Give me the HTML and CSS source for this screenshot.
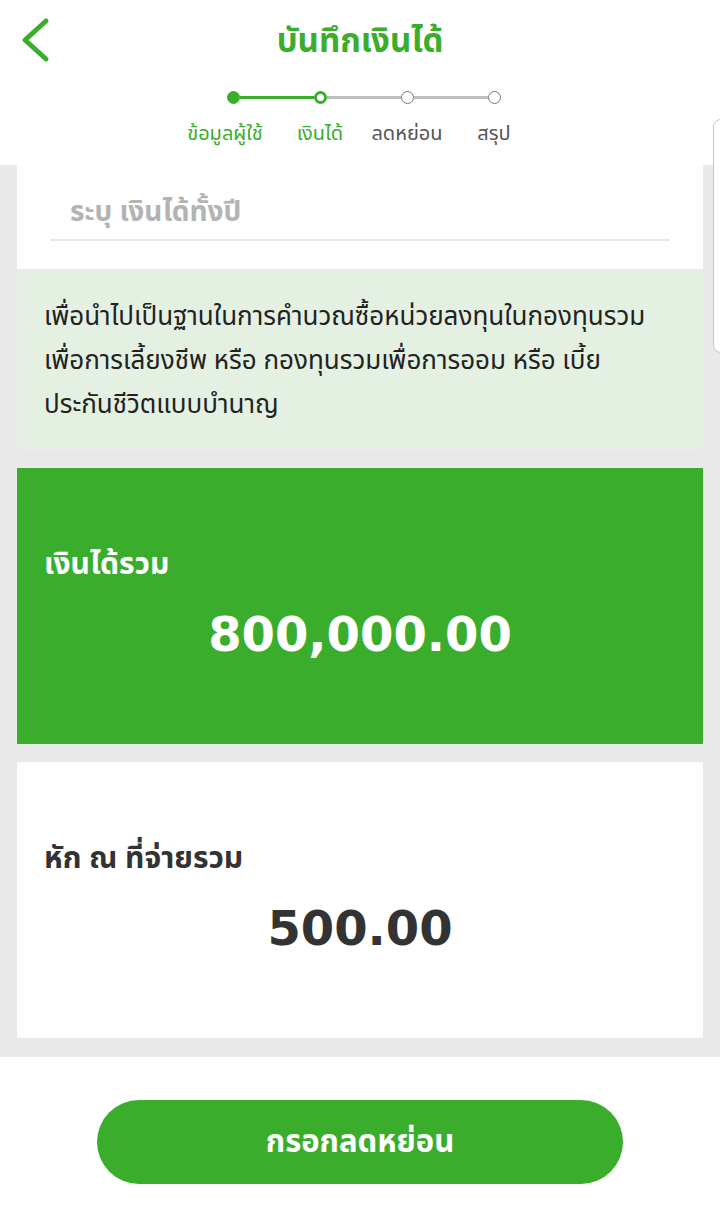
FILE: index.html
```html
<!DOCTYPE html>
<html lang="th">
<head>
<meta charset="utf-8">
<title>บันทึกเงินได้</title>
<link rel="stylesheet" href="styles.css">
</head>
<body>
<div class="app">
  <header class="topbar">
    <div class="titlebar">
      <button class="back" aria-label="back">
        <svg width="34" height="46" viewBox="0 0 34 46"><path d="M28 4 L7 23 L28 42" fill="none" stroke="#3aae2c" stroke-width="5" stroke-linecap="round" stroke-linejoin="round"/></svg>
      </button>
      <h1 class="title">บันทึกเงินได้</h1>
    </div>
    <div class="stepper">
      <div class="track">
        <span class="dot dot-done"></span>
        <span class="line line-done"></span>
        <span class="dot dot-current"></span>
        <span class="line"></span>
        <span class="dot"></span>
        <span class="line"></span>
        <span class="dot"></span>
      </div>
      <div class="labels">
        <span class="label label-on">ข้อมูลผู้ใช้</span>
        <span class="label label-on">เงินได้</span>
        <span class="label">ลดหย่อน</span>
        <span class="label">สรุป</span>
      </div>
    </div>
  </header>

  <main class="content">
    <section class="panel">
      <div class="field">
        <span class="placeholder">ระบุ เงินได้ทั้งปี</span>
      </div>
      <p class="note">เพื่อนำไปเป็นฐานในการคำนวณซื้อหน่วยลงทุนในกองทุนรวม<br>เพื่อการเลี้ยงชีพ หรือ กองทุนรวมเพื่อการออม หรือ เบี้ย<br>ประกันชีวิตแบบบำนาญ</p>
    </section>
    <section class="card card-green">
      <h2 class="card-label">เงินได้รวม</h2>
      <div class="card-amount">800,000.00</div>
    </section>
    <section class="card card-white">
      <h2 class="card-label">หัก ณ ที่จ่ายรวม</h2>
      <div class="card-amount">500.00</div>
    </section>
  </main>

  <footer class="actions">
    <button class="primary">กรอกลดหย่อน</button>
  </footer>

  <div class="edge-handle"></div>
</div>
</body>
</html>
```

FILE: styles.css
```css
* { box-sizing: border-box; }
html, body { margin: 0; padding: 0; }
body {
  width: 720px;
  height: 1226px;
  background: #ffffff;
  font-family: "Noto Sans", "Noto Sans Thai", sans-serif;
  overflow: hidden;
}
.app { position: relative; width: 720px; height: 1226px; }

.topbar { background: #fff; height: 165px; }
.titlebar {
  position: relative;
  height: 80px;
  display: flex;
  align-items: center;
  justify-content: center;
}
.back {
  position: absolute;
  left: 18px;
  top: 17px;
  border: 0;
  background: none;
  padding: 0;
  width: 34px;
  height: 46px;
}
.title {
  margin: 0 0 2px;
  color: #3aae2c;
  font-size: 33px;
  font-weight: 700;
  line-height: 1;
}

.stepper {
  display: flex;
  flex-direction: column;
  align-items: center;
  padding-left: 7px;
}
.track { display: flex; align-items: center; height: 14px; margin-top: 10px; }
.dot {
  width: 13px; height: 13px; border-radius: 50%;
  background: #fff; border: 1px solid #777;
  flex: none;
}
.dot-done { background: #3aae2c; border-color: #3aae2c; }
.dot-current { border: 3px solid #3aae2c; }
.line { width: 74px; height: 3px; background: #bdbdbd; }
.line-done { background: #3aae2c; }
.labels { display: flex; margin-top: 17px; }
.label {
  width: 87px;
  text-align: center;
  font-size: 20px;
  color: #555;
  line-height: 24px;
}
.label:first-child { margin-left: -8px; margin-right: 8px; }
.label-on { color: #3aae2c; }

.content {
  background: #e9e9e9;
  padding: 0 17px 19px;
  display: flex;
  flex-direction: column;
  gap: 18px;
}
.panel { background: #fff; }
.field {
  margin: 0 33px;
  height: 76px;
  border-bottom: 2px solid #e8e8e8;
  display: flex;
  align-items: center;
  padding-left: 20px;
  padding-top: 20px;
}
.placeholder { font-size: 28px; font-weight: 700; color: #b3b3b3; }
.note {
  margin: 28px 0 0;
  background: #e4f1e2;
  padding: 24px 27px 25px;
  font-size: 26px;
  line-height: 44px;
  color: #222;
}

.card {
  height: 276px;
  padding: 75px 27px 0;
  display: flex;
  flex-direction: column;
}
.card-green { background: #3aae2c; color: #fff; }
.card-white { background: #fff; color: #333; }
.card-label {
  margin: 0;
  font-size: 30px;
  font-weight: 700;
  line-height: 40px;
}
.card-amount {
  text-align: center;
  font-family: "DejaVu Sans", "Noto Sans", sans-serif;
  font-size: 48px;
  font-weight: 700;
  line-height: 60px;
  margin-top: 21px;
}

.actions {
  display: flex;
  justify-content: center;
  padding-top: 43px;
}
.primary {
  width: 526px;
  height: 84px;
  border: 0;
  border-radius: 42px;
  background: #3aae2c;
  color: #fff;
  font-family: inherit;
  font-size: 31px;
  font-weight: 700;
}

.edge-handle {
  position: absolute;
  left: 713px;
  top: 119px;
  width: 20px;
  height: 234px;
  border: 1px solid #c8c8c8;
  border-radius: 8px;
  background: #fff;
}
```
